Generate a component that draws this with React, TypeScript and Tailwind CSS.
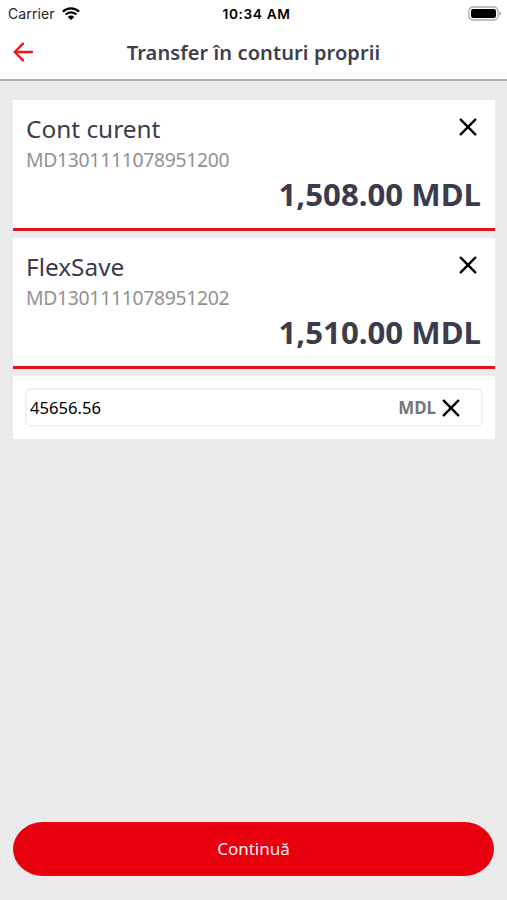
interface Account {
  name: string
  iban: string
  balance: string
}

const accounts: Account[] = [
  { name: 'Cont curent', iban: 'MD1301111078951200', balance: '1,508.00 MDL' },
  { name: 'FlexSave', iban: 'MD1301111078951202', balance: '1,510.00 MDL' },
]

function CloseIcon() {
  return (
    <svg width="18" height="18" viewBox="0 0 18 18" fill="none" stroke="#000" strokeWidth="2.4" strokeLinecap="round">
      <path d="M1.7 1.7l14.6 14.6M16.3 1.7L1.7 16.3" />
    </svg>
  )
}

function StatusBar() {
  return (
    <div className="flex h-[27px] items-center justify-between pl-2 pr-[5px] font-['Inter',sans-serif] text-black">
      <div className="flex w-28 items-center gap-[7px]">
        <span className="text-[14px] tracking-[0.1px] text-[#222]">Carrier</span>
        <svg width="18" height="14" viewBox="0 0 18 14" fill="none" stroke="#000" strokeWidth="2.2">
          <path d="M.9 4.6a11.6 11.6 0 0 1 16.2 0M3.6 7.5a7.7 7.7 0 0 1 10.8 0" />
          <path d="M9 13L5.8 9.9a4.5 4.5 0 0 1 6.4 0z" fill="#000" stroke="none" />
        </svg>
      </div>
      <span className="pl-[3px] pt-px text-[13.7px] font-semibold tracking-[0.6px]">10:34 AM</span>
      <div className="flex w-28 justify-end">
        <svg width="34" height="15" viewBox="0 0 34 15" fill="none">
          <rect x="1" y="1" width="29" height="13" rx="4" stroke="#aaa" strokeWidth="1.3" />
          <rect x="3" y="3" width="25" height="9" rx="2.2" fill="#000" />
          <path d="M31.3 5.4v4.2q1.6-.6 1.6-2.1t-1.6-2.1z" fill="#999" />
        </svg>
      </div>
    </div>
  )
}

function AccountCard({ account }: { account: Account }) {
  return (
    <div className="h-[131px] border-b-[3px] border-[#df131c] bg-white px-[13px] pt-[14px]">
      <div className="flex items-start justify-between">
        <div>
          <h2 className="text-[24.4px] leading-[30px] text-[#3b3c4b]">{account.name}</h2>
          <p className="pt-px text-[19.4px] leading-[29px] tracking-[-0.33px] text-[#929292]">{account.iban}</p>
        </div>
        <button className="mr-[5px] mt-1">
          <CloseIcon />
        </button>
      </div>
      <p className="pr-px text-right text-[31.2px] font-bold leading-10 text-[#3b3c4b]">{account.balance}</p>
    </div>
  )
}

export default function App() {
  const amount = '45656.56'

  return (
    <div className="flex h-[900px] w-[507px] flex-col bg-[#ebebeb] font-['Noto_Sans',sans-serif]">
      <header className="h-[81px] border-b-2 border-[#b0b0b0] bg-white">
        <StatusBar />
        <div className="grid h-[50px] grid-cols-[50px_1fr_50px] items-center">
          <button className="pl-[13px]">
            <svg width="21" height="20" viewBox="0 0 21 20" fill="none" stroke="#fa1118" strokeWidth="2.3" strokeLinecap="round" strokeLinejoin="round">
              <path d="M19 10H1.7M10 1.6L1.7 10l8.3 8.4" />
            </svg>
          </button>
          <h1 className="pt-0.5 text-center text-[20px] font-semibold tracking-[0.1px] text-[#3f404f]">Transfer în conturi proprii</h1>
        </div>
      </header>
      <main className="flex flex-1 flex-col gap-[7px] pl-[13px] pr-3 pt-[19px]">
        {accounts.map((account) => (
          <AccountCard key={account.iban} account={account} />
        ))}
        <div className="bg-white p-3">
          <div className="flex h-[39px] items-center rounded-md border-2 border-[#f0f0f0] pl-[3px] pr-[21px]">
            <span className="flex-1 pt-px text-[16.6px] text-black">{amount}</span>
            <span className="mr-1.5 pt-px text-[16.9px] font-bold text-[#777]">MDL</span>
            <CloseIcon />
          </div>
        </div>
      </main>
      <footer className="px-[13px] pb-6">
        <button className="h-[54px] w-full rounded-[30px/27px] bg-[#e8000f] text-[17px] text-[#fff0f0]">Continuă</button>
      </footer>
    </div>
  )
}
